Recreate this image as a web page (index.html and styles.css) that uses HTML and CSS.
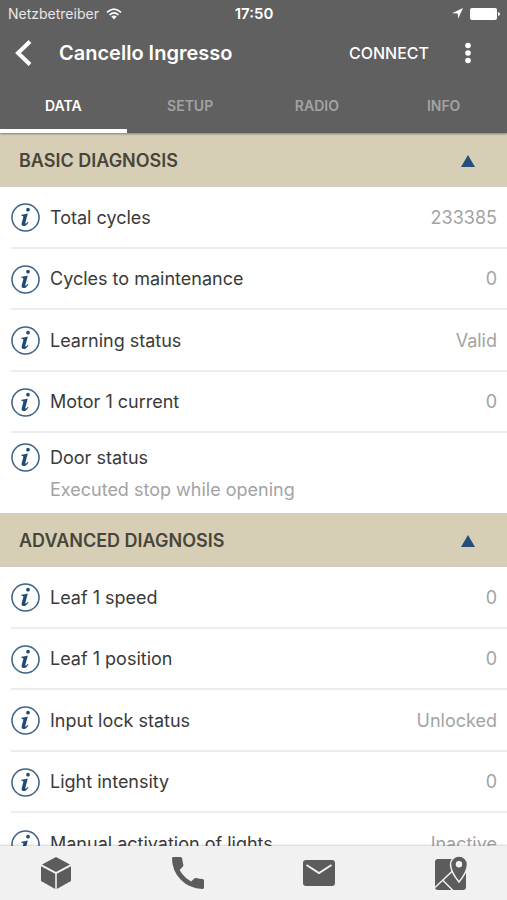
FILE: index.html
```html
<!DOCTYPE html>
<html lang="en">
<head>
<meta charset="utf-8">
<meta name="viewport" content="width=device-width, initial-scale=1">
<title>Cancello Ingresso</title>
<link rel="stylesheet" href="styles.css">
</head>
<body>
<svg class="symbols" aria-hidden="true">
  <symbol id="info" viewBox="0 0 30 30">
    <circle cx="15" cy="15" r="14" fill="none" stroke="#3f6285" stroke-width="1.6"/>
    <circle cx="17.6" cy="6.900" r="1.900" fill="#1f4a78"/>
    <path d="M10.800 12.200 Q14.400 11.900 17.400 10.800 L14.900 20.200 Q14.500 21.700 15.300 21.300 Q16.300 20.700 17.300 19.300 L18.100 19.900 Q15.700 23.900 13 23.900 Q10.400 23.800 11.100 20.700 L12.800 14.600 Q13.100 13.300 10.600 13.300 Z" fill="#1f4a78"/>
  </symbol>
  <symbol id="up" viewBox="0 0 14 12">
    <path d="M7 0 L14 12 H0 Z" fill="#254e7b"/>
  </symbol>
</svg>
<header class="top">
  <div class="status">
    <div class="carrier">
      <span>Netzbetreiber</span>
      <svg width="16" height="12" viewBox="0 0 16 12" fill="none" stroke="#fff" stroke-width="1.7" aria-hidden="true">
        <path d="M1 4.4 Q8 -2.2 15 4.4"/>
        <path d="M3.5 7 Q8 2.8 12.5 7"/>
        <path d="M8 11.4 L5.3 8.6 Q8 6.4 10.7 8.6 Z" fill="#fff" stroke="none"/>
      </svg>
    </div>
    <time class="clock">17:50</time>
    <div class="indicators">
      <svg width="11" height="11" viewBox="0 0 11 11" aria-hidden="true"><path d="M11 0 L6.3 10.6 L5.7 5.6 L0 5.2 Z" fill="#fff"/></svg>
      <svg width="30" height="12" viewBox="0 0 30 12" fill="#fff" aria-hidden="true"><rect width="27" height="12" rx="2"/><path d="M28 4 Q30 4.300 30 6 Q30 7.700 28 8 Z"/></svg>
    </div>
  </div>
  <div class="toolbar">
    <button class="back" aria-label="Back">
      <svg width="17" height="26" viewBox="0 0 17 26" fill="none" stroke="#fff" stroke-width="4" aria-hidden="true"><path d="M15 1.500 L3 13 L15 24.500"/></svg>
    </button>
    <h1>Cancello Ingresso</h1>
    <button class="connect">CONNECT</button>
    <button class="more" aria-label="More">
      <svg width="6" height="22" viewBox="0 0 6 22" fill="#fff" aria-hidden="true"><circle cx="3" cy="3.500" r="2.800"/><circle cx="3" cy="11" r="2.800"/><circle cx="3" cy="18.500" r="2.800"/></svg>
    </button>
  </div>
  <nav class="tabs">
    <a class="current" href="#data">DATA</a>
    <a href="#setup">SETUP</a>
    <a href="#radio">RADIO</a>
    <a href="#info-tab">INFO</a>
  </nav>
</header>
<main id="data">
  <section>
    <h2><button class="section-toggle" aria-expanded="true">BASIC DIAGNOSIS <svg width="14" height="12"><use href="#up"/></svg></button></h2>
    <ul class="rows">
      <li><button class="info" aria-label="About total cycles"><svg><use href="#info"/></svg></button><span>Total cycles</span><span class="value">233385</span></li>
      <li><button class="info" aria-label="About cycles to maintenance"><svg><use href="#info"/></svg></button><span>Cycles to maintenance</span><span class="value">0</span></li>
      <li><button class="info" aria-label="About learning status"><svg><use href="#info"/></svg></button><span>Learning status</span><span class="value">Valid</span></li>
      <li><button class="info" aria-label="About motor 1 current"><svg><use href="#info"/></svg></button><span>Motor 1 current</span><span class="value">0</span></li>
    </ul>
    <div class="detail">
      <button class="info" aria-label="About door status"><svg><use href="#info"/></svg></button><span>Door status</span>
      <span class="value">Executed stop while opening</span>
    </div>
  </section>
  <section>
    <h2><button class="section-toggle" aria-expanded="true">ADVANCED DIAGNOSIS <svg width="14" height="12"><use href="#up"/></svg></button></h2>
    <ul class="rows">
      <li><button class="info" aria-label="About leaf 1 speed"><svg><use href="#info"/></svg></button><span>Leaf 1 speed</span><span class="value">0</span></li>
      <li><button class="info" aria-label="About leaf 1 position"><svg><use href="#info"/></svg></button><span>Leaf 1 position</span><span class="value">0</span></li>
      <li><button class="info" aria-label="About input lock status"><svg><use href="#info"/></svg></button><span>Input lock status</span><span class="value">Unlocked</span></li>
      <li><button class="info" aria-label="About light intensity"><svg><use href="#info"/></svg></button><span>Light intensity</span><span class="value">0</span></li>
    </ul>
    <ul class="rows more-rows">
      <li><button class="info" aria-label="About manual activation of lights"><svg><use href="#info"/></svg></button><span>Manual activation of lights</span><span class="value">Inactive</span></li>
    </ul>
  </section>
</main>
<nav class="bottom">
  <a href="#products" aria-label="Products">
    <svg width="34" height="34" viewBox="0 0 34 34" fill="#5c5c5c" aria-hidden="true"><path d="M17 1 L31 8.400 L17 16 L3 8.400 Z M2 10.200 L16.200 17.800 V33 L2 25 Z M32 10.200 L17.800 17.800 V33 L32 25 Z"/></svg>
  </a>
  <a href="#call" aria-label="Call">
    <svg width="34" height="34" viewBox="0 0 34 34" fill="#5c5c5c" aria-hidden="true"><path d="M2 1 H9.500 Q11 1 11.200 2.500 Q11.500 5.500 12.300 8.500 Q12.600 9.800 11.700 10.800 L8.600 14 Q13 21.500 20.200 25.600 L23.300 22.500 Q24.200 21.600 25.500 22 Q28.400 22.800 31.500 23 Q33 23.200 33 24.700 V31.500 Q33 33 31.300 33 Q18.500 32.500 9.800 23.700 Q1 14.500 1 2.500 Q1 1 2 1 Z"/></svg>
  </a>
  <a href="#mail" aria-label="Mail">
    <svg width="34" height="28" viewBox="0 0 34 28" aria-hidden="true"><rect x="1" y="1" width="32" height="26" rx="3" fill="#5c5c5c"/><path d="M4.500 6 L17 14 L29.500 6" fill="none" stroke="#f1f1f1" stroke-width="2"/></svg>
  </a>
  <a href="#map" aria-label="Map">
    <svg width="34" height="36" viewBox="0 0 34 36" aria-hidden="true"><rect x="1" y="4" width="31" height="31" rx="3" fill="#5c5c5c"/><path d="M1 32.500 L20 14.500 M8.500 25 L19.500 36" fill="none" stroke="#f1f1f1" stroke-width="1.500"/><path d="M25 27 Q16.500 16.500 16.500 9.500 A8.500 8.500 0 0 1 33.500 9.500 Q33.500 16.500 25 27 Z" fill="#5c5c5c" stroke="#f1f1f1" stroke-width="1.500"/><circle cx="25" cy="9.300" r="3.200" fill="#f1f1f1"/></svg>
  </a>
</nav>
</body>
</html>
```
FILE: styles.css
```css
* {
  box-sizing: border-box;
}

body {
  margin: 0;
  height: 100vh;
  display: flex;
  flex-direction: column;
  background: #fff;
  color: #3a3a3a;
  font-family: Inter, "Liberation Sans", sans-serif;
  font-size: 18px;
  line-height: 24px;
}

button {
  padding: 0;
  border: 0;
  background: none;
  color: inherit;
  font: inherit;
}

a {
  color: inherit;
  text-decoration: none;
}

svg {
  display: block;
}

.symbols {
  position: absolute;
  width: 0;
  height: 0;
}

.top {
  flex: none;
  position: relative;
  background: #606060;
  color: #fff;
  box-shadow: 0 1px 2px rgba(0, 0, 0, 0.4);
}

.status {
  display: grid;
  grid-template-columns: 1fr auto 1fr;
  align-items: center;
  height: 27px;
  padding: 0 7px 0 8px;
  font-size: 14px;
}

.carrier,
.indicators {
  display: flex;
  align-items: center;
  gap: 7px;
}

.carrier {
  color: #e6e6e6;
}

.indicators {
  justify-content: flex-end;
}

.clock {
  font-size: 15px;
  font-weight: 600;
}

.toolbar {
  display: flex;
  align-items: center;
  height: 52px;
  padding: 0 36px 0 15px;
}

h1 {
  flex: 1;
  margin: 0 0 0 27px;
  font-size: 20px;
  font-weight: 600;
}

.connect {
  margin-right: 36px;
  font-size: 16px;
  font-weight: 500;
}

.tabs {
  display: grid;
  grid-template-columns: repeat(4, 1fr);
  height: 54px;
  font-size: 14px;
  font-weight: 600;
  line-height: 54px;
  text-align: center;
  color: #a3a3a3;
}

.tabs .current {
  color: #fff;
  box-shadow: inset 0 -4px #fff;
}

main {
  flex: 1;
  min-height: 0;
  overflow: hidden;
}

h2 {
  margin: 0;
  font-size: 18px;
  font-weight: 600;
}

.section-toggle {
  display: flex;
  align-items: center;
  justify-content: space-between;
  width: 100%;
  height: 54px;
  padding: 2px 32px 0 19px;
  background: #d6cfb6;
  border-bottom: 1px solid #d2cac0;
  color: #49453a;
}

.rows {
  display: flex;
  flex-direction: column;
  min-height: 246px;
  margin: 0;
  padding: 0 0 0 11px;
  list-style: none;
}

.rows li {
  flex: 1;
  display: flex;
  align-items: center;
  padding: 2px 10px 0 0;
  border-bottom: 2px solid #ededed;
}

.more-rows {
  min-height: 62px;
}

.info {
  flex: none;
  margin-right: 10px;
}

.info svg {
  width: 29px;
  height: 29px;
}

.value {
  color: #a3a3a3;
}

.rows .value {
  margin-left: auto;
}

.detail {
  display: grid;
  grid-template-columns: auto 1fr;
  align-items: center;
  row-gap: 6px;
  padding: 10px 10px 11px 11px;
}

.detail .value {
  grid-column: 2;
}

.bottom {
  flex: none;
  position: relative;
  display: flex;
  align-items: center;
  justify-content: space-between;
  height: 54px;
  padding: 0 39px;
  background: #f1f1f1;
  box-shadow: 0 -1px 2px rgba(0, 0, 0, 0.18);
}
```
